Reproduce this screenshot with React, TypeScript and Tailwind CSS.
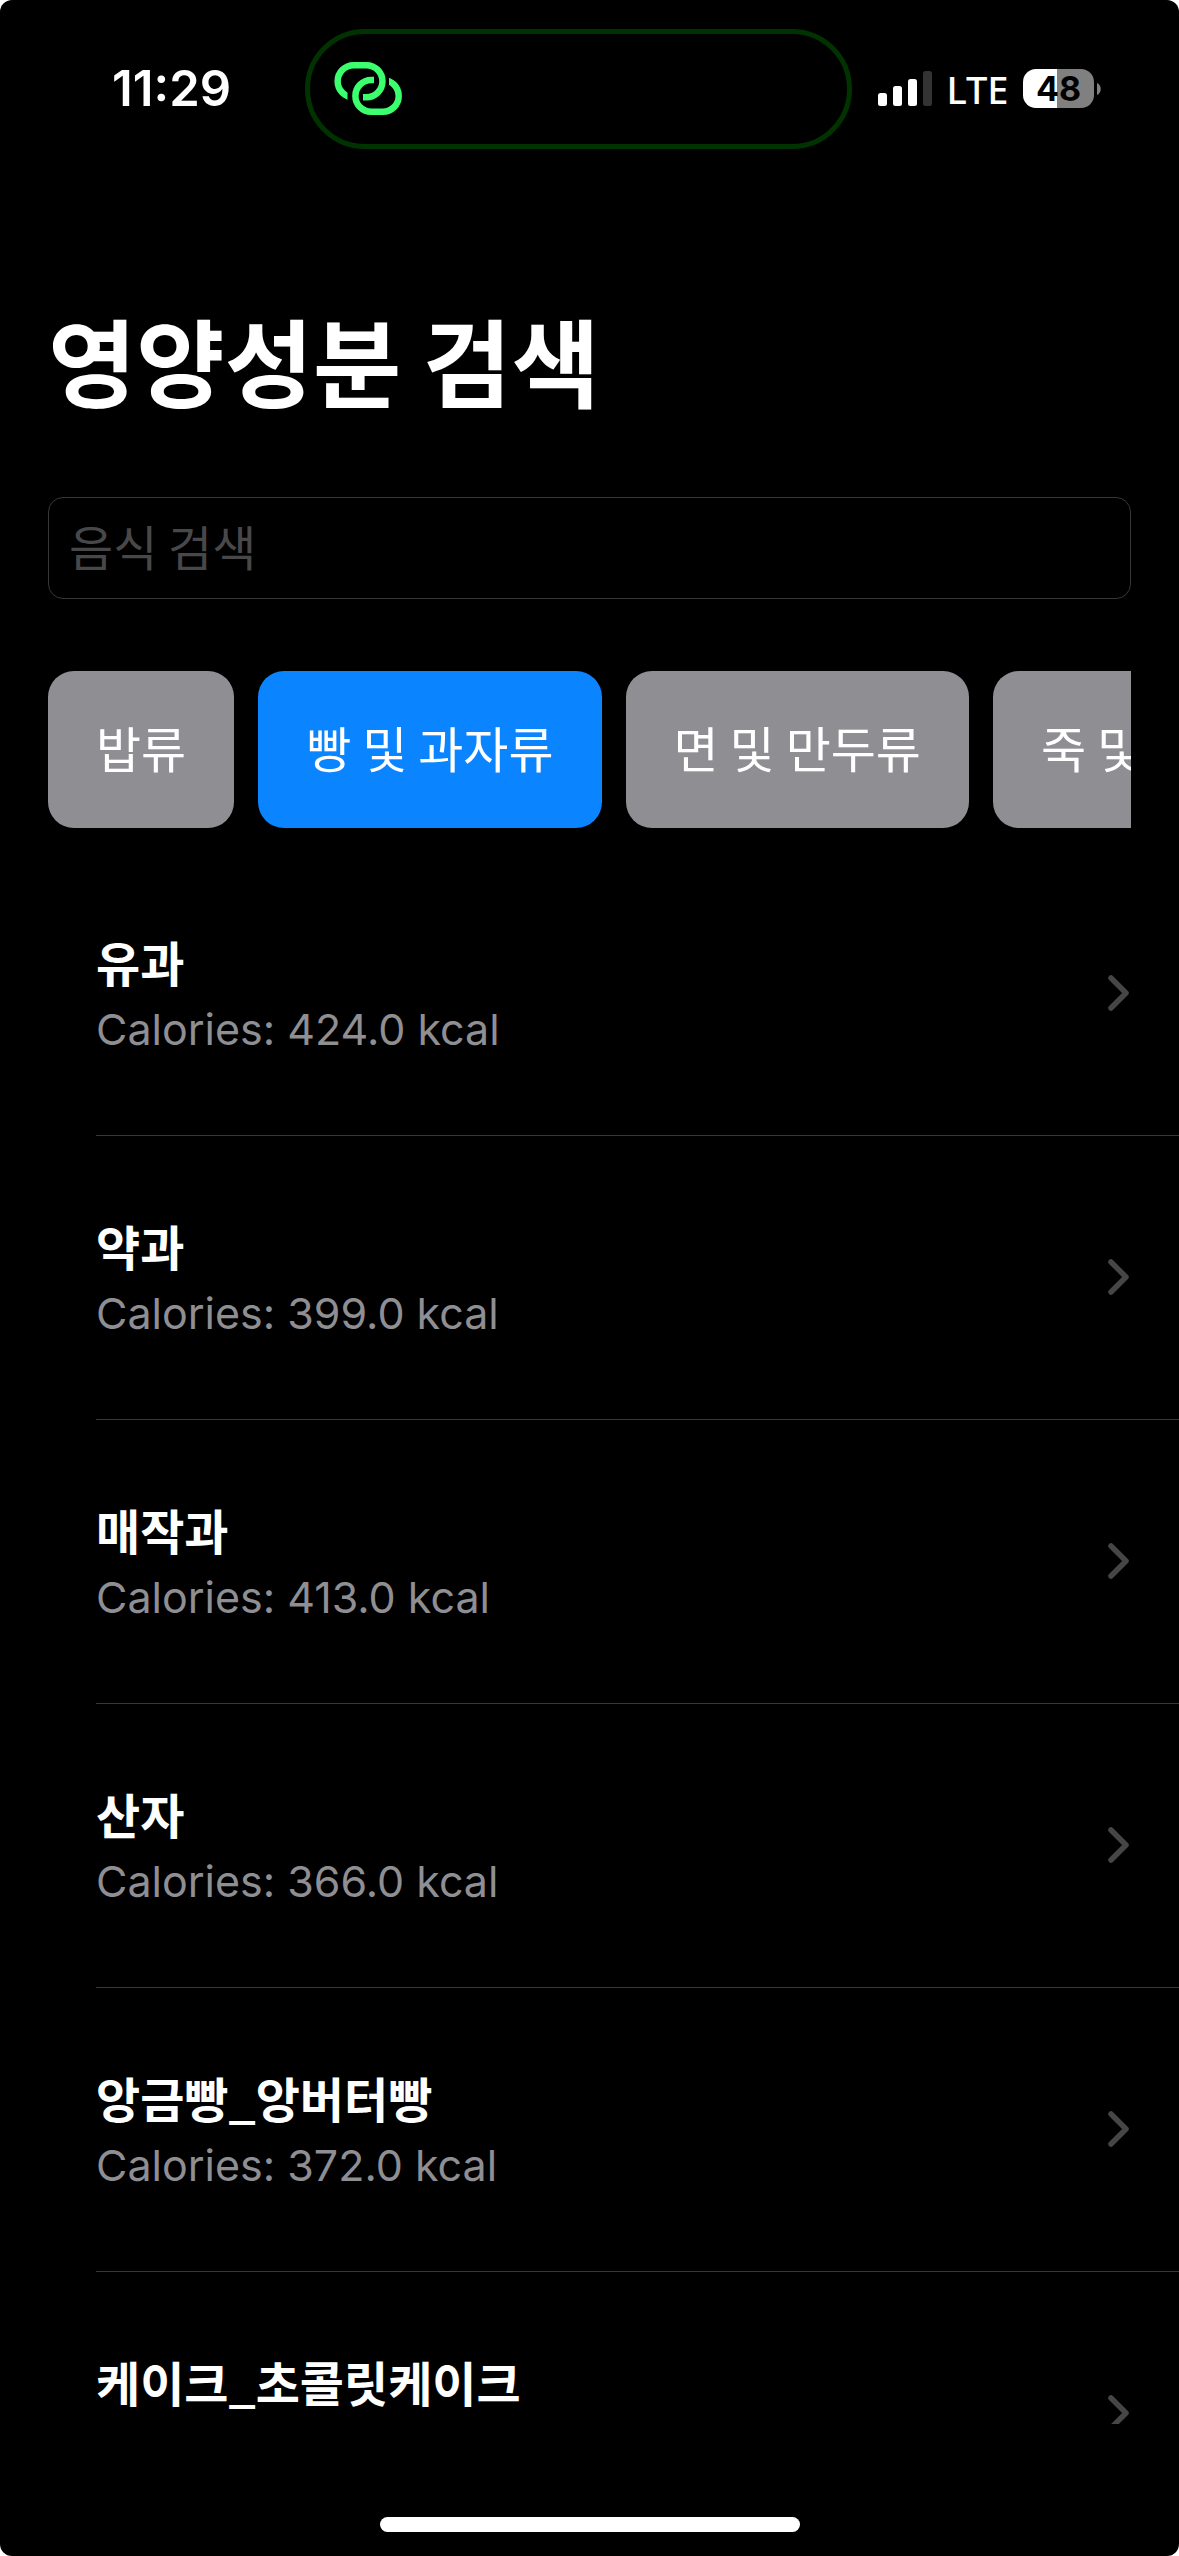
import { useState } from "react";

const categories = ["밥류", "빵 및 과자류", "면 및 만두류", "죽 및 스프류"];

const foods = [
  { name: "유과", calories: "424.0" },
  { name: "약과", calories: "399.0" },
  { name: "매작과", calories: "413.0" },
  { name: "산자", calories: "366.0" },
  { name: "앙금빵_앙버터빵", calories: "372.0" },
  { name: "케이크_초콜릿케이크", calories: "385.0" },
];

function HotspotIcon() {
  return (
    <svg width="69" height="55" viewBox="0 0 69 55" fill="none" stroke="#3bff6d" strokeWidth="6.5" aria-hidden="true">
      <clipPath id="link-a">
        <path d="M0 0H69V55H29V25H13.5V55H0Z" />
      </clipPath>
      <clipPath id="link-b">
        <path d="M0 0H40V30H55V0H69V55H0Z" />
      </clipPath>
      <path clipPath="url(#link-a)" d="M29 36.3H32.4A16 16 0 0 0 32.4 4.2H19.7A16 16 0 0 0 19.7 36.3" />
      <path clipPath="url(#link-b)" d="M40 19H37.3A15.9 15.9 0 0 0 37.3 50.8H48.8A15.9 15.9 0 0 0 48.8 19" />
    </svg>
  );
}

function StatusBar() {
  return (
    <header className="flex h-[177px] shrink-0 items-center">
      <div className="w-[305px] shrink-0 pr-[74px] text-right text-[49px] leading-[60px] font-semibold">11:29</div>
      <div className="flex h-[120px] grow items-center rounded-[60px] border-5 border-[#003300] pl-[24px]">
        <HotspotIcon />
      </div>
      <div className="flex w-[327px] shrink-0 items-center pl-[26px]">
        <svg width="54" height="35" viewBox="0 0 54 35" fill="#fff" aria-hidden="true">
          <rect x="0" y="22" width="9" height="13" rx="2.5" />
          <rect x="15" y="15" width="9" height="20" rx="2.5" />
          <rect x="30" y="8" width="9" height="27" rx="2.5" />
          <rect x="45" y="0" width="9" height="35" rx="2.5" fill="#333" />
        </svg>
        <span className="w-[91px] text-center font-['Noto_Sans',sans-serif] text-[38px] leading-[48px] font-medium">LTE</span>
        <span className="flex h-[39px] w-[71px] items-center justify-center rounded-[13px] bg-linear-to-r from-white from-48% to-[#808080] to-48% text-[34px] leading-[39px] font-bold text-black">
          48
        </span>
        <svg className="ml-[3px]" width="4" height="12" viewBox="0 0 4 12" fill="#808080" aria-hidden="true">
          <path d="M0 0C5 2 5 10 0 12Z" />
        </svg>
      </div>
    </header>
  );
}

function Chevron() {
  return (
    <svg className="shrink-0" width="23" height="38" viewBox="0 0 23 38" fill="none" stroke="#464646" strokeWidth="5.5" strokeLinecap="round" strokeLinejoin="round" aria-hidden="true">
      <path d="M3 3L18 18L3 33" />
    </svg>
  );
}

export default function App() {
  const [selected, setSelected] = useState(1);
  const [query, setQuery] = useState("");

  return (
    <div className="flex h-screen flex-col overflow-hidden rounded-[12px] bg-black font-[Inter,'Noto_Sans_CJK_KR',sans-serif] text-white">
      <StatusBar />

      <h1 className="mt-[112px] px-[48px] font-['Noto_Sans_CJK_KR',sans-serif] text-[96px] leading-[140px] font-bold">영양성분 검색</h1>

      <div className="mt-[68px] px-[48px]">
        <label htmlFor="food-search" className="sr-only">
          음식 검색
        </label>
        <input
          id="food-search"
          type="text"
          value={query}
          onChange={(e) => setQuery(e.target.value)}
          placeholder="음식 검색"
          className="block h-[102px] w-full rounded-[15px] border border-[#38383a] bg-black px-[20px] pb-[6px] font-['Noto_Sans_CJK_KR',sans-serif] text-[48px] leading-[70px] text-white placeholder:text-[#48484b]"
        />
      </div>

      <div className="mx-[48px] mt-[72px] flex shrink-0 gap-[24px] overflow-x-auto [scrollbar-width:none]">
        {categories.map((label, i) => (
          <button
            key={label}
            type="button"
            aria-pressed={i === selected}
            onClick={() => setSelected(i)}
            className={
              "h-[157px] shrink-0 rounded-[26px] px-[48px] pb-[6px] font-['Noto_Sans_CJK_KR',sans-serif] text-[49px] leading-[72px] whitespace-nowrap " +
              (i === selected ? "bg-[#0a84ff]" : "bg-[#8e8e93]")
            }
          >
            {label}
          </button>
        ))}
      </div>

      <ul className="mt-[24px] min-h-0 flex-1 overflow-y-auto [scrollbar-width:none]">
        {foods.map((food) => (
          <li key={food.name} className="ml-[96px] border-b border-[#38383a]">
            <a href="#food" className="flex h-[283px] items-center justify-between pr-[48px]">
              <span className="flex flex-col">
                <span className="font-['Noto_Sans_CJK_KR',sans-serif] text-[48px] leading-[70px] font-bold">{food.name}</span>
                <span className="text-[43px] leading-[66px] text-[#8e8e93]">Calories: {food.calories} kcal</span>
              </span>
              <Chevron />
            </a>
          </li>
        ))}
      </ul>

      <footer className="flex h-[132px] shrink-0 items-end justify-center pb-[24px]">
        <div className="h-[15px] w-[420px] rounded-full bg-white" />
      </footer>
    </div>
  );
}
